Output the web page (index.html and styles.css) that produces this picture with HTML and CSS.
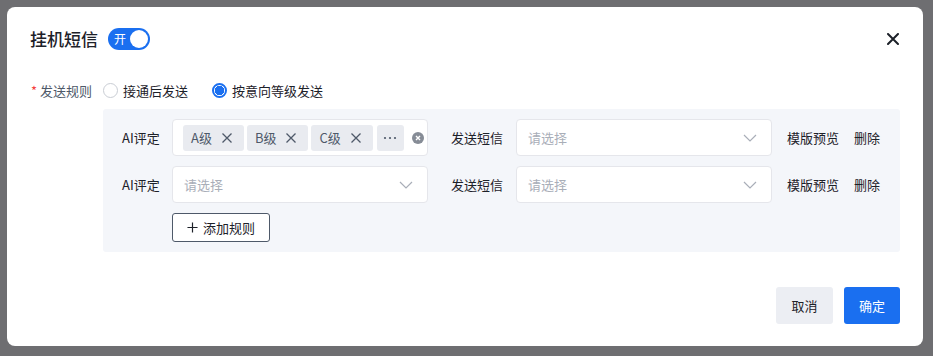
FILE: index.html
```html
<!DOCTYPE html>
<html lang="zh">
<head>
<meta charset="utf-8">
<title>挂机短信</title>
<link rel="stylesheet" href="styles.css">
</head>
<body>
<div class="dialog">
  <div class="header">
    <div class="title">挂机短信</div>
    <div class="switch"><span class="switch-text">开</span><span class="knob"></span></div>
    <div class="close">
      <svg width="12" height="12" viewBox="0 0 12 12"><path d="M1 1L11 11M11 1L1 11" stroke="#1d2129" stroke-width="2" stroke-linecap="round"/></svg>
    </div>
  </div>
  <div class="form-row">
    <div class="form-label"><span class="req">*</span>发送规则</div>
    <label class="radio"><span class="radio-dot"></span>接通后发送</label>
    <label class="radio checked"><span class="radio-dot"></span>按意向等级发送</label>
  </div>
  <div class="panel">
    <div class="rule">
      <div class="lbl lbl-ai">AI评定</div>
      <div class="select multi">
        <span class="tag">A级<svg class="tag-x" width="12" height="12" viewBox="0 0 12 12"><path d="M1.5 1.5L10.5 10.5M10.5 1.5L1.5 10.5" stroke="#4e5969" stroke-width="1.3"/></svg></span>
        <span class="tag">B级<svg class="tag-x" width="12" height="12" viewBox="0 0 12 12"><path d="M1.5 1.5L10.5 10.5M10.5 1.5L1.5 10.5" stroke="#4e5969" stroke-width="1.3"/></svg></span>
        <span class="tag">C级<svg class="tag-x" width="12" height="12" viewBox="0 0 12 12"><path d="M1.5 1.5L10.5 10.5M10.5 1.5L1.5 10.5" stroke="#4e5969" stroke-width="1.3"/></svg></span>
        <span class="tag more"><svg width="14" height="4" viewBox="0 0 14 4"><circle cx="2" cy="2" r="1.1" fill="#4e5969"/><circle cx="7" cy="2" r="1.1" fill="#4e5969"/><circle cx="12" cy="2" r="1.1" fill="#4e5969"/></svg></span>
        <svg class="clear" width="12" height="12" viewBox="0 0 12 12"><circle cx="6" cy="6" r="6" fill="#868c96"/><path d="M4 4L8 8M8 4L4 8" stroke="#fff" stroke-width="1.4"/></svg>
      </div>
      <div class="lbl lbl-sms">发送短信</div>
      <div class="select"><span class="ph">请选择</span><svg class="arrow" width="14" height="8" viewBox="0 0 14 8"><path d="M1 1L7 7L13 1" fill="none" stroke="#a9aeb8" stroke-width="1.2"/></svg></div>
      <a class="link">模版预览</a>
      <a class="link del">删除</a>
    </div>
    <div class="rule">
      <div class="lbl lbl-ai">AI评定</div>
      <div class="select"><span class="ph">请选择</span><svg class="arrow" width="14" height="8" viewBox="0 0 14 8"><path d="M1 1L7 7L13 1" fill="none" stroke="#a9aeb8" stroke-width="1.2"/></svg></div>
      <div class="lbl lbl-sms">发送短信</div>
      <div class="select"><span class="ph">请选择</span><svg class="arrow" width="14" height="8" viewBox="0 0 14 8"><path d="M1 1L7 7L13 1" fill="none" stroke="#a9aeb8" stroke-width="1.2"/></svg></div>
      <a class="link">模版预览</a>
      <a class="link del">删除</a>
    </div>
    <div class="add-row">
      <button class="add-btn"><svg width="11" height="11" viewBox="0 0 12 12"><path d="M6 0.5V11.5M0.5 6H11.5" stroke="#1d2129" stroke-width="1.3"/></svg>添加规则</button>
    </div>
  </div>
  <div class="footer">
    <button class="btn cancel">取消</button>
    <button class="btn ok">确定</button>
  </div>
</div>
</body>
</html>
```
FILE: styles.css
```css
* { box-sizing: border-box; }
html, body { margin: 0; }
body {
  background: #6e6e71;
  padding: 7px;
  font-family: "Noto Sans CJK SC", "Noto Sans", sans-serif;
  font-size: 13px;
  color: #1d2129;
}
.dialog {
  width: 916px;
  height: 339px;
  background: #fff;
  border-radius: 8px;
  padding: 20px 23px 22px 23px;
  display: flex;
  flex-direction: column;
}
.header {
  display: flex;
  align-items: center;
  height: 24px;
}
.title {
  font-size: 17px;
  font-weight: 500;
  line-height: 24px;
}
.switch {
  margin-left: 10px;
  width: 42px;
  height: 22px;
  border-radius: 11px;
  background: #1a6ff0;
  display: flex;
  align-items: center;
  padding: 0 2px 0 6px;
  justify-content: space-between;
}
.switch-text {
  color: #fff;
  font-size: 12px;
  line-height: 22px;
}
.knob {
  width: 18px;
  height: 18px;
  border-radius: 50%;
  background: #fff;
}
.close {
  margin-left: auto;
  margin-right: 1px;
  display: flex;
}
.form-row {
  display: flex;
  align-items: center;
  height: 22px;
  margin-top: 28px;
}
.form-label {
  width: 73px;
  color: #4e5969;
  padding-left: 1px;
  white-space: nowrap;
}
.req {
  color: #f53f3f;
  margin-right: 3px;
}
.radio {
  display: flex;
  align-items: center;
  margin-right: 24px;
  color: #1d2129;
}
.radio-dot {
  width: 15px;
  height: 15px;
  border-radius: 50%;
  border: 1px solid #c9cdd4;
  margin-right: 5px;
  background: #fff;
}
.radio.checked .radio-dot {
  border: 2px solid #1a6ff0;
  background: radial-gradient(circle, #1a6ff0 0 4.5px, #fff 5px);
}
.panel {
  margin-top: 8px;
  margin-left: 73px;
  background: #f4f6fa;
  border-radius: 3px;
  padding: 10px 18px 10px 19px;
  display: flex;
  flex-direction: column;
  gap: 10px;
}
.rule {
  display: flex;
  align-items: center;
  height: 37px;
}
.lbl { color: #1d2129; white-space: nowrap; flex-shrink: 0; }
.lbl-ai { width: 50px; }
.lbl-sms { width: 65px; margin-left: 23px; }
.select {
  width: 256px;
  height: 37px;
  flex-shrink: 0;
  background: #fff;
  border: 1px solid #e5e6eb;
  border-radius: 4px;
  display: flex;
  align-items: center;
  padding: 0 14px 0 11px;
}
.select.multi { padding-left: 10px; gap: 3px; padding-right: 8px; }
.ph { color: #a9aeb8; }
.arrow { margin-left: auto; }
.tag {
  flex-shrink: 0;
  height: 26px;
  background: #e9ebf0;
  border-radius: 3px;
  display: flex;
  align-items: center;
  padding: 0 11px 0 8px;
  color: #4e5969;
  white-space: nowrap;
}
.tag-x { margin-left: 9px; }
.tag.more {
  padding: 0;
  width: 27px;
  justify-content: center;
  margin-left: 1px;
}
.clear { margin-left: 5px; flex-shrink: 0; }
.link {
  color: #1d2129;
  margin-left: 15px;
  white-space: nowrap;
}
.link.del { margin-left: 15px; }
.add-row {
  display: flex;
  padding-left: 50px;
}
.add-btn {
  height: 29px;
  width: 98px;
  border: 1px solid #4e5969;
  border-radius: 3px;
  background: #fff;
  font-family: inherit;
  font-size: 13px;
  color: #1d2129;
  display: flex;
  align-items: center;
  justify-content: center;
  gap: 5px;
  padding: 0;
}
.footer {
  margin-top: auto;
  display: flex;
  justify-content: flex-end;
  gap: 11px;
}
.btn {
  height: 37px;
  border: none;
  border-radius: 3px;
  font-family: inherit;
  font-size: 13px;
  padding: 0;
}
.cancel { width: 57px; background: #eceef3; color: #1d2129; }
.ok { width: 56px; background: #1a6ff0; color: #fff; }
```
